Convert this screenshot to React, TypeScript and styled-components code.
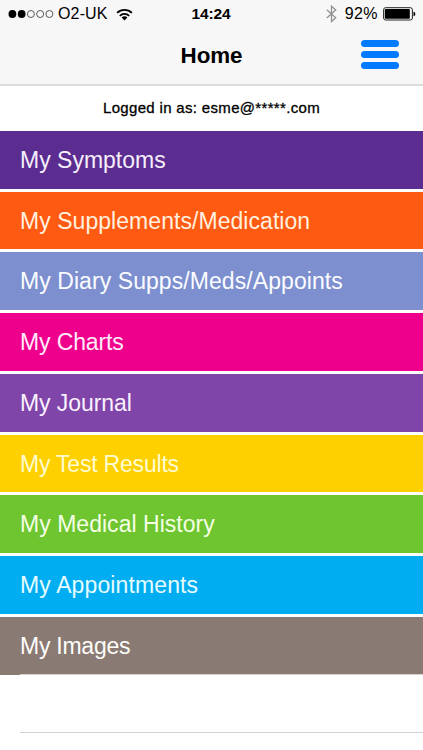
import React from "react";
import styled, { createGlobalStyle } from "styled-components";

const GlobalStyle = createGlobalStyle`
  * { box-sizing: border-box; }
  body { margin: 0; background: #fff; overflow: hidden; }
`;

const Screen = styled.main`
  display: flex;
  flex-direction: column;
  width: 423px;
  height: 750px;
  overflow: hidden;
  background: #fff;
  color: #000;
  font-family: "Liberation Sans", Arial, sans-serif;
`;

const Header = styled.header`
  flex: none;
  height: 86px;
  background: #f7f7f7;
  border-bottom: 2px solid #dcdcdc;
`;

const StatusBar = styled.div`
  display: grid;
  grid-template-columns: 1fr auto 1fr;
  align-items: center;
  height: 28px;
  padding: 0 7px 0 8px;
  font-size: 16px;
  line-height: 28px;
  white-space: nowrap;
`;

const StatusGroup = styled.div<{ $end?: boolean }>`
  display: flex;
  align-items: center;
  justify-content: ${(p) => (p.$end ? "flex-end" : "flex-start")};
`;

const Carrier = styled.span`
  width: 53px;
  margin: 0 5px 0 4px;
  letter-spacing: 0.15px;
`;

const Clock = styled.time`
  padding-right: 2px;
  font-weight: 700;
  font-size: 15.5px;
  letter-spacing: -0.1px;
`;

const Percent = styled.span`
  margin: 0 5px 0 8px;
  letter-spacing: 0.4px;
`;

const NavBar = styled.nav`
  display: grid;
  grid-template-columns: 1fr auto 1fr;
  align-items: center;
  height: 56px;
  padding-right: 24px;
`;

const Title = styled.h1`
  grid-column: 2;
  margin: 0;
  padding-left: 24px;
  font-size: 22.4px;
  line-height: 56px;
  font-weight: 700;
  letter-spacing: -0.1px;
`;

const MenuButton = styled.button`
  display: flex;
  flex-direction: column;
  justify-self: end;
  gap: 4.3px;
  width: 38px;
  margin-top: -3px;
  padding: 0;
  border: 0;
  background: none;
`;

const MenuBar = styled.span`
  height: 6.9px;
  border-radius: 3.5px;
  background: #007aff;
`;

const Account = styled.p`
  flex: none;
  height: 44.75px;
  margin: 0;
  text-align: center;
  font-size: 15px;
  line-height: 44px;
  letter-spacing: 0.33px;
  -webkit-text-stroke: 0.3px #000;
`;

const MenuList = styled.ul`
  display: flex;
  flex: none;
  flex-direction: column;
  gap: 3px;
  margin: 0;
  padding: 0;
  list-style: none;
`;

const MenuItem = styled.li<{ $color: string; $ink: string; $spacing: number }>`
  height: 57.75px;
  padding-left: 20px;
  background: ${(p) => p.$color};
  color: ${(p) => p.$ink};
  font-size: 23px;
  line-height: 58px;
  letter-spacing: ${(p) => p.$spacing}px;
  white-space: nowrap;
`;

const EmptyRow = styled.div`
  flex: none;
  height: 59.5px;
  margin: -1px 0 0 20px;
  border-top: 1px solid #d8d2d0;
  border-bottom: 1px solid #d2d1d3;
`;

const items = [
  { label: "My Symptoms", color: "#5c2d91", ink: "#f6effb", spacing: 0 },
  { label: "My Supplements/Medication", color: "#ff5a12", ink: "#fff0df", spacing: 0.05 },
  { label: "My Diary Supps/Meds/Appoints", color: "#7d8fce", ink: "#fafcff", spacing: 0.07 },
  { label: "My Charts", color: "#ef008c", ink: "#ffeafa", spacing: -0.12 },
  { label: "My Journal", color: "#8045a9", ink: "#faf1ff", spacing: -0.08 },
  { label: "My Test Results", color: "#ffd000", ink: "#fffbd0", spacing: -0.2 },
  { label: "My Medical History", color: "#6ec52f", ink: "#f4ffe5", spacing: 0.03 },
  { label: "My Appointments", color: "#00adf1", ink: "#e5fbff", spacing: 0.12 },
  { label: "My Images", color: "#897b73", ink: "#fffdfb", spacing: -0.25 },
];

const Signal = () => (
  <svg width="46" height="10" viewBox="0 0 46 10">
    {[0, 1, 2, 3, 4].map((i) => (
      <circle
        key={i}
        cx={4.4 + i * 9.25}
        cy="5"
        r={i < 2 ? 3.9 : 3.5}
        fill={i < 2 ? "#000" : "none"}
        stroke={i < 2 ? "none" : "#333"}
        strokeWidth="0.8"
      />
    ))}
  </svg>
);

const Wifi = () => (
  <svg width="17" height="13" viewBox="0 0 17 13" fill="none" stroke="#000" strokeWidth="1.8">
    <path d="M1.1 4.8a10.7 10.7 0 0 1 14.8 0M3.8 7.8a6.9 6.9 0 0 1 9.4 0" />
    <path d="M5.6 9.5a4.5 4.5 0 0 1 5.8 0L8.5 12.4Z" fill="#000" stroke="none" />
  </svg>
);

const Bluetooth = () => (
  <svg width="11" height="18" viewBox="0 0 11 18" fill="none" stroke="#929292" strokeWidth="1.3">
    <path d="M.8 4.8 9.7 12.8 5.5 16.5V1.2L9.7 5 .8 13" />
  </svg>
);

const Battery = () => (
  <svg width="33" height="14" viewBox="0 0 33 14">
    <rect x=".6" y=".7" width="28.8" height="12.3" rx="2" fill="none" stroke="#222" />
    <rect x="1.8" y="1.9" width="25" height="9.9" rx=".8" />
    <path d="M30.5 4.7C32.9 4.9 32.9 9 30.5 9.2Z" />
  </svg>
);

export default function App() {
  return (
    <Screen>
      <GlobalStyle />
      <Header>
        <StatusBar>
          <StatusGroup>
            <Signal />
            <Carrier>O2-UK</Carrier>
            <Wifi />
          </StatusGroup>
          <Clock>14:24</Clock>
          <StatusGroup $end>
            <Bluetooth />
            <Percent>92%</Percent>
            <Battery />
          </StatusGroup>
        </StatusBar>
        <NavBar>
          <Title>Home</Title>
          <MenuButton aria-label="Open menu">
            <MenuBar />
            <MenuBar />
            <MenuBar />
          </MenuButton>
        </NavBar>
      </Header>
      <Account>Logged in as: esme@*****.com</Account>
      <MenuList>
        {items.map((item) => (
          <MenuItem key={item.label} $color={item.color} $ink={item.ink} $spacing={item.spacing}>
            {item.label}
          </MenuItem>
        ))}
      </MenuList>
      <EmptyRow />
    </Screen>
  );
}
